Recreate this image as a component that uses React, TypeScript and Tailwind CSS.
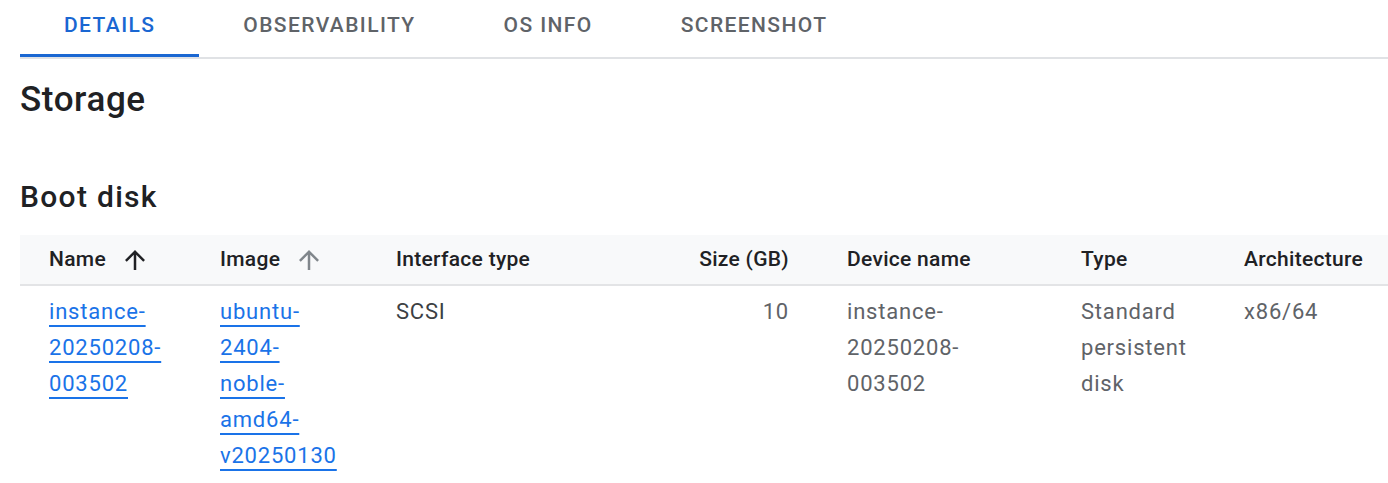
import React from "react";

const ArrowUp = ({ className }: { className?: string }) => (
  <svg viewBox="0 0 24 24" className={className} fill="currentColor">
    <path d="M4 12l1.41 1.41L11 7.83V20h2V7.83l5.58 5.59L20 12l-8-8-8 8z" />
  </svg>
);

const tabs = ["DETAILS", "OBSERVABILITY", "OS INFO", "SCREENSHOT"];

const Link = ({ parts }: { parts: string[] }) => (
  <div>
    {parts.map((p) => (
      <div key={p}>
        <a href="#" className="text-[#1a73e8] underline underline-offset-[6px] decoration-[1.5px]">
          {p}
        </a>
      </div>
    ))}
  </div>
);

const Lines = ({ parts }: { parts: string[] }) => (
  <div>
    {parts.map((p) => (
      <div key={p}>{p}</div>
    ))}
  </div>
);

export default function App() {
  return (
    <div className="w-[1388px] h-[483px] bg-white overflow-hidden pl-[20px]" style={{ fontFamily: "Roboto, 'Noto Sans', sans-serif" }}>
      <div className="flex border-b-2 border-[#e0e2e5]">
        {tabs.map((t, i) => (
          <div
            key={t}
            className={`h-[57px] px-[44px] pt-[12px] text-[21px] leading-[26px] font-medium tracking-[1.4px] border-b-[3px] whitespace-nowrap ${
              i === 0 ? "text-[#1a67d2] border-[#1a67d2]" : "text-[#5f6368] border-transparent"
            }`}
          >
            {t}
          </div>
        ))}
      </div>
      <h1 className="mt-[22px] text-[35px] leading-[38px] font-medium tracking-[0.6px] text-[#202124]">Storage</h1>
      <h2 className="mt-[61px] text-[30px] leading-[34px] font-medium tracking-[1.3px] text-[#202124]">Boot disk</h2>
      <div className="mt-[21px]">
        <div className="grid grid-cols-[171px_176px_233px_218px_234px_163px_1fr] h-[51px] bg-[#f8f9fa] border-b-2 border-[#e3e4e6] items-center text-[21px] font-medium tracking-[0.3px] text-[#202124]">
          <div className="pl-[29px] flex items-center gap-[14px]">
            Name <ArrowUp className="w-[30px] h-[30px] text-[#202124]" />
          </div>
          <div className="pl-[29px] flex items-center gap-[14px]">
            Image <ArrowUp className="w-[30px] h-[30px] text-[#80868b]" />
          </div>
          <div className="pl-[29px] whitespace-nowrap">Interface type</div>
          <div className="pr-[29px] text-right whitespace-nowrap">Size (GB)</div>
          <div className="pl-[29px] whitespace-nowrap">Device name</div>
          <div className="pl-[29px]">Type</div>
          <div className="pl-[29px] whitespace-nowrap">Architecture</div>
        </div>
        <div className="grid grid-cols-[171px_176px_233px_218px_234px_163px_1fr] pt-[8px] text-[22px] leading-[36px] tracking-[0.8px] text-[#5f6368]">
          <div className="pl-[29px]">
            <Link parts={["instance-", "20250208-", "003502"]} />
          </div>
          <div className="pl-[29px]">
            <Link parts={["ubuntu-", "2404-", "noble-", "amd64-", "v20250130"]} />
          </div>
          <div className="pl-[29px] text-[#3c4043]">SCSI</div>
          <div className="pr-[29px] text-right">10</div>
          <div className="pl-[29px]">
            <Lines parts={["instance-", "20250208-", "003502"]} />
          </div>
          <div className="pl-[29px]">
            <Lines parts={["Standard", "persistent", "disk"]} />
          </div>
          <div className="pl-[29px]">x86/64</div>
        </div>
      </div>
    </div>
  );
}
